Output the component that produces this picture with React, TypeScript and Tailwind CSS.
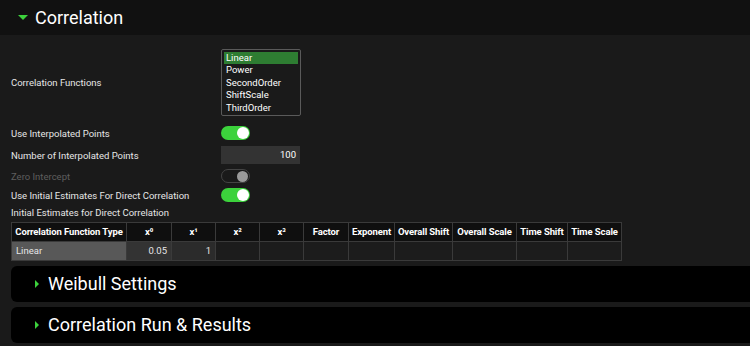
import React from "react";

const functions = ["Linear", "Power", "SecondOrder", "ShiftScale", "ThirdOrder"];

const columns = [
  { label: "Correlation Function Type", w: "w-[114px]" },
  { label: "x⁰", w: "w-[45px]" },
  { label: "x¹", w: "w-[44px]" },
  { label: "x²", w: "w-[44px]" },
  { label: "x³", w: "w-[44px]" },
  { label: "Factor", w: "w-[45px]" },
  { label: "Exponent", w: "w-[46px]" },
  { label: "Overall Shift", w: "w-[58px]" },
  { label: "Overall Scale", w: "w-[64px]" },
  { label: "Time Shift", w: "w-[51px]" },
  { label: "Time Scale", w: "w-[54px]" },
];

const Toggle = ({ on, disabled }: { on: boolean; disabled?: boolean }) => (
  <div
    className={
      on
        ? "w-[29px] h-[14px] rounded-full bg-[#3cd23c] flex items-center justify-end pr-[1px]"
        : "w-[29px] h-[14px] rounded-full border border-[#444] bg-[#1a1a1a] flex items-center justify-end pr-[1px]"
    }
  >
    <div
      className={
        disabled
          ? "w-[11px] h-[11px] rounded-full bg-[#9a9a9a]"
          : "w-[12px] h-[12px] rounded-full bg-white"
      }
    />
  </div>
);

const Row = ({
  label,
  h,
  muted,
  children,
}: {
  label: string;
  h: string;
  muted?: boolean;
  children?: React.ReactNode;
}) => (
  <div className={`flex items-center ${h}`}>
    <div
      className={`w-[210px] pt-[1px] text-[9.5px] leading-none ${
        muted ? "text-[#5e5e5e]" : "text-[#e6e6e6]"
      }`}
    >
      {label}
    </div>
    {children}
  </div>
);

const Panel = ({ title }: { title: string }) => (
  <div className="h-[36px] ml-[11px] bg-black rounded-l-[6px] flex items-center pl-[24px]">
    <div className="w-0 h-0 border-y-[4px] border-y-transparent border-l-[4px] border-l-[#3cd23c] mr-[9px]" />
    <span className="text-[18px] text-white leading-none">{title}</span>
  </div>
);

export default function App() {
  return (
    <div
      className="w-[750px] h-[346px] overflow-hidden bg-[#1a1a1a]"
      style={{ fontFamily: "Roboto, 'Liberation Sans', sans-serif" }}
    >
      {/* header */}
      <div className="h-[35px] bg-[#111111] flex items-center pl-[18px]">
        <div className="w-0 h-0 border-x-[5px] border-x-transparent border-t-[5px] border-t-[#3cd23c] mr-[7px]" />
        <span className="text-[18px] text-white leading-none">Correlation</span>
      </div>

      <div className="pl-[11px] pt-[14px]">
        <Row label="Correlation Functions" h="h-[67px]">
          <div className="w-[80px] h-[67px] border border-[#5a5a5a] rounded-[2px] bg-[#1a1a1a] p-[2px]">
            {functions.map((f, i) => (
              <div
                key={f}
                className={`h-[12.4px] leading-[12.4px] px-[2px] text-[9.5px] text-white ${
                  i === 0 ? "bg-[#2e7d32]" : ""
                }`}
              >
                {f}
              </div>
            ))}
          </div>
        </Row>
        <div className="h-[6px]" />
        <Row label="Use Interpolated Points" h="h-[22px]">
          <Toggle on />
        </Row>
        <Row label="Number of Interpolated Points" h="h-[22px]">
          <div className="w-[79px] h-[18px] bg-[#333333] text-[9.5px] text-white flex items-center justify-end pr-[4px]">
            100
          </div>
        </Row>
        <Row label="Zero Intercept" h="h-[20px]" muted>
          <Toggle on={false} disabled />
        </Row>
        <Row label="Use Initial Estimates For Direct Correlation" h="h-[18px]">
          <Toggle on />
        </Row>
        <Row label="Initial Estimates for Direct Correlation" h="h-[16px]" />

        {/* table */}
        <div className="mt-[2px] w-fit flex flex-col border border-[#3a3a3a]">
          <div className="flex h-[18px] bg-[#0f0f0f]">
            {columns.map((c, i) => (
              <div
                key={c.label}
                className={`${c.w} ${i ? "border-l border-[#3a3a3a]" : ""} flex items-center justify-center text-[9.5px] font-bold text-white whitespace-nowrap tracking-[-0.1px]`}
              >
                {c.label}
              </div>
            ))}
          </div>
          <div className="flex h-[19px] border-t border-[#3a3a3a]">
            {columns.map((c, i) => (
              <div
                key={c.label}
                className={`${c.w} ${i ? "border-l border-[#3a3a3a]" : ""} ${
                  i === 0
                    ? "bg-[#585858] justify-start pl-[4px]"
                    : i === 1
                    ? "bg-[#333333] justify-end pr-[4px]"
                    : i === 2
                    ? "bg-[#2b2b2b] justify-end pr-[4px]"
                    : "bg-[#1c1c1c]"
                } flex items-center text-[9.5px] text-[#e6e6e6]`}
              >
                {i === 0 ? "Linear" : i === 1 ? "0.05" : i === 2 ? "1" : ""}
              </div>
            ))}
          </div>
        </div>
      </div>

      <div className="mt-[5px] flex flex-col gap-[5px]">
        <Panel title="Weibull Settings" />
        <Panel title="Correlation Run & Results" />
      </div>
    </div>
  );
}
